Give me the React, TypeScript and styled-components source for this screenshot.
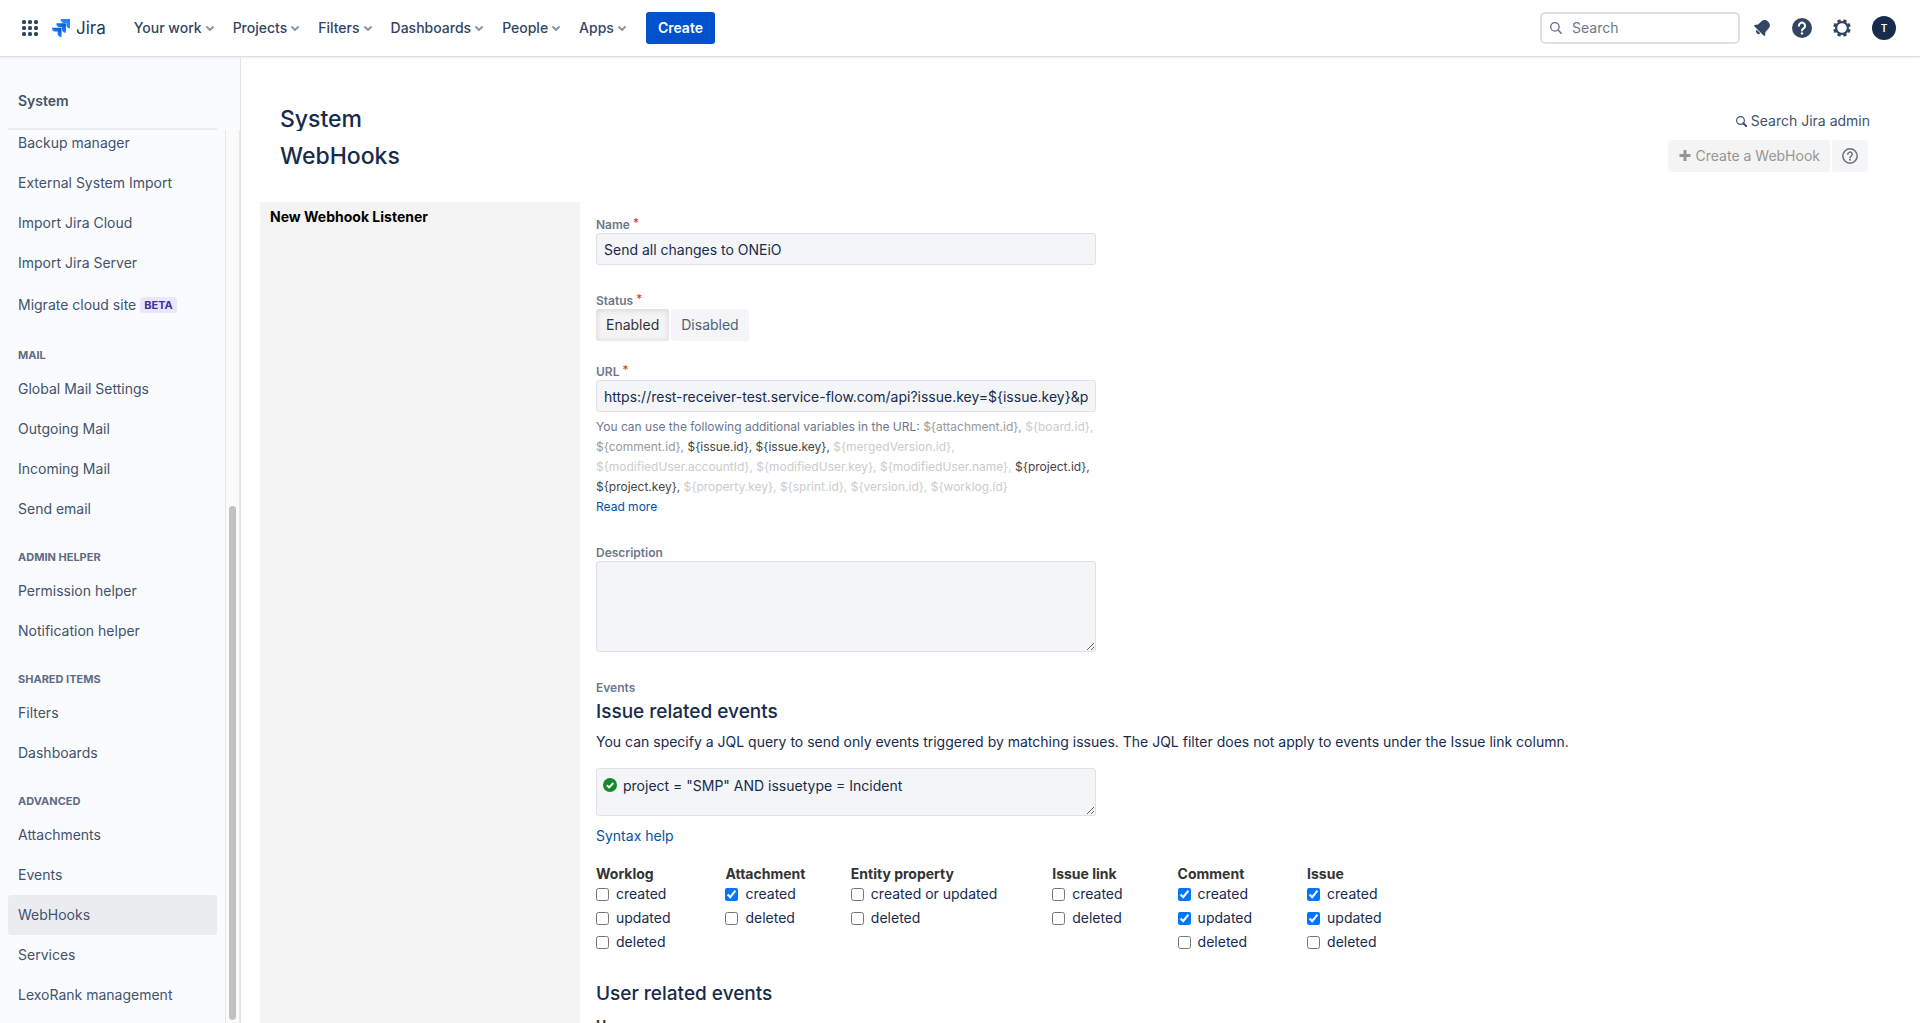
import React, { useEffect, useRef, useState } from "react";
import styled, { createGlobalStyle, css } from "styled-components";

const GlobalStyle = createGlobalStyle`
  *, *::before, *::after { box-sizing: border-box; }
  body {
    margin: 0;
    background: #fff;
    color: #172b4d;
    font-family: Inter, "Liberation Sans", sans-serif;
    font-size: 14px;
    line-height: 20px;
  }
  h1, h2, h3, p, ul { margin: 0; padding: 0; }
  ul { list-style: none; }
  button, input, textarea { font: inherit; color: inherit; }
  a { text-decoration: none; }
`;

const Page = styled.div`
  display: flex;
  flex-direction: column;
  height: 100vh;
  overflow: hidden;
`;

/* ---------- top bar ---------- */

const TopBar = styled.header`
  display: flex;
  align-items: center;
  flex: none;
  height: 56px;
  padding: 0 24px 0 20px;
  background: #fff;
  box-shadow: 0 1px 0 #dcdee3, 0 2px 2px #ebecf0;
  z-index: 1;
`;

const IconButton = styled.button`
  display: flex;
  align-items: center;
  justify-content: center;
  width: 20px;
  height: 20px;
  padding: 0;
  border: 0;
  background: none;
  color: #344563;
`;

const Logo = styled.a`
  display: flex;
  align-items: center;
  gap: 6px;
  margin: 0 28px 0 12px;
  color: #253858;
  font-size: 17px;
`;

const Nav = styled.nav`
  display: flex;
  gap: 19px;
`;

const NavItem = styled.button`
  display: flex;
  align-items: center;
  gap: 4px;
  padding: 0;
  border: 0;
  background: none;
  color: #344563;
  font-weight: 500;
  svg { color: #8993a4; }
`;

const CreateButton = styled.button`
  height: 32px;
  margin-left: 20px;
  padding: 0 12px;
  border: 0;
  border-radius: 3px;
  background: #0052cc;
  color: #fff;
  font-weight: 600;
`;

const SearchBox = styled.label`
  display: flex;
  align-items: center;
  gap: 10px;
  width: 200px;
  height: 32px;
  margin-left: auto;
  padding: 0 8px;
  border: 2px solid #dfe1e6;
  border-radius: 5px;
  color: #5e6c84;
  input {
    flex: 1;
    min-width: 0;
    padding: 0;
    border: 0;
    outline: 0;
    background: none;
  }
  input::placeholder { color: #6b778c; opacity: 1; }
`;

const Tools = styled.div`
  display: flex;
  align-items: center;
  gap: 20px;
  margin-left: 12px;
`;

const Avatar = styled.button`
  width: 24px;
  height: 24px;
  padding: 0;
  border: 0;
  border-radius: 50%;
  background: #172b4d;
  color: #fff;
  font-size: 10px;
  font-weight: 600;
`;

/* ---------- sidebar ---------- */

const Body = styled.div`
  display: flex;
  flex: 1;
  min-height: 0;
`;

const Sidebar = styled.aside`
  display: flex;
  flex-direction: column;
  flex: none;
  width: 241px;
  border-right: 1px solid #e3e5e9;
  background: #fafbfc;
  color: #42526e;
`;

const SidebarTitle = styled.div`
  flex: none;
  width: 209px;
  height: 74px;
  margin-left: 8px;
  padding: 35px 10px 0;
  border-bottom: 2px solid #ebecf0;
  font-weight: 600;
`;

const SidebarScroll = styled.div`
  display: flex;
  flex: 1;
  min-height: 0;
`;

const MenuView = styled.nav`
  flex: 1;
  padding: 0 8px 8px;
  overflow-y: scroll;
  scrollbar-width: none;
`;

const Track = styled.div`
  display: flex;
  flex-direction: column;
  justify-content: flex-end;
  width: 15px;
  padding: 3px;
  border: solid #e8e8e8;
  border-width: 0 1px;
  background: #fafafa;
`;

const Thumb = styled.div`
  height: 58%;
  border-radius: 4px;
  background: #c1c1c1;
`;

const MenuHeading = styled.h3`
  padding: 20px 10px 6px;
  color: #5e6c84;
  font-size: 11px;
  font-weight: 700;
  line-height: 16px;
  text-transform: uppercase;
`;

const MenuLink = styled.a<{ $active?: boolean; $tall?: boolean }>`
  display: flex;
  align-items: center;
  gap: 4px;
  height: ${(p) => (p.$tall ? 44 : 40)}px;
  padding: 0 10px;
  border-radius: 3px;
  background: ${(p) => (p.$active ? "#ebecf0" : "none")};
  color: #42526e;
`;

const Lozenge = styled.span`
  padding: 0 4px;
  border-radius: 3px;
  background: #eae6ff;
  color: #403294;
  font-size: 11px;
  font-weight: 700;
  line-height: 16px;
`;

/* ---------- main area ---------- */

const Main = styled.main`
  display: flex;
  flex-direction: column;
  flex: 1;
  min-width: 0;
  padding: 50px 0 0 19px;
  overflow: hidden;
`;

const HeadRow = styled.div<{ $bar?: boolean }>`
  display: flex;
  align-items: ${(p) => (p.$bar ? "center" : "flex-end")};
  justify-content: space-between;
  flex: none;
  height: ${(p) => (p.$bar ? 32 : 25)}px;
  margin-top: ${(p) => (p.$bar ? 9 : 0)}px;
  padding: 0 ${(p) => (p.$bar ? 52 : 50)}px 0 20px;
`;

const titleText = css`
  font-size: 23px;
  font-weight: 500;
  line-height: 26px;
`;

const SectionTitle = styled.h1`
  ${titleText}
  height: 25px;
  overflow: hidden;
`;

const PageTitle = styled.h2`
  ${titleText}
`;

const AdminSearch = styled.a`
  display: flex;
  align-items: center;
  gap: 4px;
  color: #42526e;
`;

const Actions = styled.div`
  display: flex;
  gap: 2px;
`;

const ActionButton = styled.button`
  display: flex;
  align-items: center;
  justify-content: center;
  gap: 4px;
  min-width: 36px;
  height: 32px;
  padding: 0 10px;
  border: 0;
  border-radius: 3px;
  background: #f4f5f7;
  color: #6b6e73;
  &:disabled { background: #f4f4f4; color: #959595; }
`;

const Columns = styled.div`
  display: flex;
  flex: 1;
  min-height: 0;
  margin-top: 30px;
`;

const ListenerPanel = styled.section`
  flex: none;
  width: 320px;
  padding: 5px 10px;
  background: #f4f4f4;
  color: #000;
  font-weight: 700;
`;

const Form = styled.form`
  flex: 1;
  min-width: 0;
  padding: 15px 16px 0;
`;

const Field = styled.div<{ $gap?: number }>`
  margin-bottom: ${(p) => p.$gap ?? 28}px;
`;

const labelText = css`
  display: flex;
  gap: 3px;
  color: #6b778c;
  font-size: 12px;
  font-weight: 600;
  line-height: 16px;
`;

const Label = styled.label`
  ${labelText}
`;

const GroupLabel = styled.div`
  ${labelText}
`;

const Star = styled.span`
  color: #de350b;
  font-weight: 400;
  line-height: 12px;
`;

const boxed = css`
  display: block;
  width: 100%;
  max-width: 500px;
  border: 1px solid #dfe1e6;
  border-radius: 3px;
  outline: 0;
  background: #f4f5f7;
  color: #172b4d;
`;

const TextInput = styled.input`
  ${boxed}
  height: 32px;
  padding: 0 7px;
`;

const TextBox = styled.textarea<{ $rows: "tall" | "query" }>`
  ${boxed}
  height: ${(p) => (p.$rows === "tall" ? 91 : 48)}px;
  padding: ${(p) => (p.$rows === "tall" ? "7px" : "7px 7px 7px 26px")};
  resize: both;
`;

const ToggleRow = styled.div`
  display: flex;
  gap: 2px;
`;

const Toggle = styled.button<{ $on?: boolean }>`
  height: 32px;
  padding: 0 10px;
  border: 0;
  border-radius: 3px;
  background: ${(p) => (p.$on ? "#f4f4f4" : "#f4f5f7")};
  box-shadow: ${(p) => (p.$on ? "inset 0 1px 6px #d4d4d4" : "none")};
  color: ${(p) => (p.$on ? "#333" : "#505f79")};
`;

const Hint = styled.p`
  max-width: 500px;
  margin-top: 5px;
  color: #6b778c;
  font-size: 12px;
  line-height: 20px;
`;

const tones = { off: "#cccccc", some: "#999999", on: "#444444" };

const Variable = styled.span<{ $tone: keyof typeof tones }>`
  color: ${(p) => tones[p.$tone]};
`;

const TextLink = styled.a`
  color: #0052a8;
`;

const SectionHeading = styled.h3`
  font-size: 19px;
  font-weight: 500;
  line-height: 24px;
`;

const Intro = styled.p`
  margin: 8px 0 16px;
`;

const QueryBox = styled.div`
  position: relative;
  margin-bottom: 10px;
`;

const QueryMark = styled.svg`
  position: absolute;
  top: 10px;
  left: 7px;
`;

const EventGroups = styled.div<{ $top?: number }>`
  display: flex;
  flex-wrap: wrap;
  gap: 44px;
  margin: ${(p) => p.$top ?? 18}px 0 30px;
`;

const EventGroup = styled.div`
  display: flex;
  flex-direction: column;
  gap: 4px;
`;

const EventTitle = styled.div`
  margin-bottom: -4px;
  color: #333;
  font-weight: 700;
`;

const Check = styled.label`
  display: flex;
  align-items: center;
  gap: 7px;
  padding-right: 11px;
  input { width: 13px; height: 13px; margin: 0; }
`;

/* ---------- icons ---------- */

const Chevron = () => (
  <svg width="8" height="8" viewBox="0 0 8 8" fill="none" stroke="currentColor" strokeWidth="1.8" strokeLinecap="round" strokeLinejoin="round">
    <path d="M1 3l3 3 3-3" />
  </svg>
);

const GridIcon = () => (
  <svg width="16" height="16" viewBox="0 0 16 16" fill="currentColor">
    {[2, 8, 14].flatMap((y) => [2, 8, 14].map((x) => <rect key={`${x}-${y}`} x={x - 2} y={y - 2} width="4" height="4" rx="1.5" />))}
  </svg>
);

const JiraMark = () => (
  <svg width="18" height="18" viewBox="0 0 24 24">
    <defs>
      <linearGradient id="mid" x1="1" y1="0" x2="0.4" y2="0.7">
        <stop offset="0.1" stopColor="#0052cc" />
        <stop offset="1" stopColor="#2684ff" />
      </linearGradient>
    </defs>
    <path fill="#2684ff" d="M23.3 0H11.5a5.3 5.3 0 0 0 5.3 5.3H19v2.1a5.3 5.3 0 0 0 5.3 5.2V1a1 1 0 0 0-1-1z" />
    <path fill="url(#mid)" d="M17.5 5.8H5.7A5.3 5.3 0 0 0 11 11h2.2v2.1a5.3 5.3 0 0 0 5.3 5.3V6.8a1 1 0 0 0-1-1z" />
    <path fill="url(#mid)" d="M11.7 11.5H0a5.3 5.3 0 0 0 5.2 5.2h2.200v2.100A5.300 5.300 0 0 0 12.700 24V12.500a1 1 0 0 0-1-1z" />
  </svg>
);

const Bell = () => (
  <svg width="20" height="20" viewBox="0 0 20 20" fill="currentColor">
    <g transform="translate(1 -1) rotate(45 10 10)">
      <path d="M10 2.500C6.800 2.500 4.900 4.800 4.900 7.800v2.800c0 .9-.3 1.600-1 2.300l-.9.900c-.8.800-.4 1.800.6 1.800h12.800c1 0 1.400-1 .6-1.800l-.9-.9c-.7-.7-1-1.400-1-2.300V7.800c0-3-1.900-5.300-5.100-5.300z" />
      <path d="M7.400 16.400h5.200a2.600 2.300 0 0 1-5.200 0z" />
    </g>
  </svg>
);

const HelpSolid = () => (
  <svg width="20" height="20" viewBox="0 0 20 20">
    <circle cx="10" cy="10" r="10" fill="currentColor" />
    <path d="M6.900 7.700a3.100 3.100 0 1 1 4.700 2.700c-1 .6-1.600 1-1.600 2.100" fill="none" stroke="#fff" strokeWidth="2" strokeLinecap="round" />
    <circle cx="10" cy="15.400" r="1.200" fill="#fff" />
  </svg>
);

const HelpOutline = () => (
  <svg width="16" height="16" viewBox="0 0 16 16" fill="none" stroke="currentColor" strokeWidth="1.500">
    <circle cx="8" cy="8" r="7.200" />
    <path d="M5.800 6.300a2.200 2.200 0 1 1 3.300 1.900c-.8.500-1.100.8-1.100 1.600" strokeLinecap="round" />
    <circle cx="8" cy="11.800" r="1" fill="currentColor" stroke="none" />
  </svg>
);

const Gear = () => (
  <svg width="20" height="20" viewBox="0 0 20 20" fill="none" stroke="currentColor">
    <circle cx="10" cy="10" r="5.900" strokeWidth="2.200" />
    {[22.5, 67.5, 112.5, 157.5, 202.5, 247.5, 292.5, 337.5].map((a) => (
      <path key={a} d="M10 1.200v2.600" strokeWidth="3.400" transform={`rotate(${a} 10 10)`} />
    ))}
  </svg>
);

const Magnifier = ({ heavy }: { heavy?: boolean }) => (
  <svg width={heavy ? 11 : 12} height={heavy ? 11 : 12} viewBox="0 0 12 12" fill="none" stroke="currentColor" strokeLinecap="round">
    <circle cx="4.900" cy="4.900" r="4.200" strokeWidth="1.300" />
    <path d="M8 8l3.200 3.200" strokeWidth={heavy ? 2.2 : 1.4} />
  </svg>
);

const Plus = () => (
  <svg width="14" height="14" viewBox="0 0 14 14" stroke="currentColor" strokeWidth="3">
    <path d="M7 1v11M1.500 6.500h11" />
  </svg>
);

/* ---------- content ---------- */

type Item = { text: string; beta?: boolean; active?: boolean };

const menu: { heading?: string; items: Item[] }[] = [
  {
    items: [
      { text: "Backup manager" },
      { text: "External System Import" },
      { text: "Import Jira Cloud" },
      { text: "Import Jira Server" },
      { text: "Migrate cloud site", beta: true },
    ],
  },
  {
    heading: "Mail",
    items: [{ text: "Global Mail Settings" }, { text: "Outgoing Mail" }, { text: "Incoming Mail" }, { text: "Send email" }],
  },
  { heading: "Admin helper", items: [{ text: "Permission helper" }, { text: "Notification helper" }] },
  { heading: "Shared items", items: [{ text: "Filters" }, { text: "Dashboards" }] },
  {
    heading: "Advanced",
    items: [
      { text: "Attachments" },
      { text: "Events" },
      { text: "WebHooks", active: true },
      { text: "Services" },
      { text: "LexoRank management" },
    ],
  },
];

const variables: [string, keyof typeof tones][] = [
  ["attachment.id", "some"],
  ["board.id", "off"],
  ["comment.id", "some"],
  ["issue.id", "on"],
  ["issue.key", "on"],
  ["mergedVersion.id", "off"],
  ["modifiedUser.accountId", "off"],
  ["modifiedUser.key", "off"],
  ["modifiedUser.name", "off"],
  ["project.id", "on"],
  ["project.key", "on"],
  ["property.key", "off"],
  ["sprint.id", "off"],
  ["version.id", "off"],
  ["worklog.id", "off"],
];

const issueEvents: { title: string; options: [string, boolean][] }[] = [
  { title: "Worklog", options: [["created", false], ["updated", false], ["deleted", false]] },
  { title: "Attachment", options: [["created", true], ["deleted", false]] },
  { title: "Entity property", options: [["created or updated", false], ["deleted", false]] },
  { title: "Issue link", options: [["created", false], ["deleted", false]] },
  { title: "Comment", options: [["created", true], ["updated", true], ["deleted", false]] },
  { title: "Issue", options: [["created", true], ["updated", true], ["deleted", false]] },
];

export default function App() {
  const menuRef = useRef<HTMLElement>(null);
  const [enabled, setEnabled] = useState(true);

  useEffect(() => {
    const view = menuRef.current;
    if (view) view.scrollTop = view.scrollHeight;
  }, []);

  return (
    <Page>
      <GlobalStyle />
      <TopBar>
        <IconButton aria-label="Switch to"><GridIcon /></IconButton>
        <Logo href="#"><JiraMark />Jira</Logo>
        <Nav>
          {["Your work", "Projects", "Filters", "Dashboards", "People", "Apps"].map((text) => (
            <NavItem key={text}>{text}<Chevron /></NavItem>
          ))}
        </Nav>
        <CreateButton>Create</CreateButton>
        <SearchBox>
          <Magnifier />
          <input type="search" placeholder="Search" aria-label="Search" />
        </SearchBox>
        <Tools>
          <IconButton aria-label="Notifications"><Bell /></IconButton>
          <IconButton aria-label="Help"><HelpSolid /></IconButton>
          <IconButton aria-label="Settings"><Gear /></IconButton>
          <Avatar aria-label="Profile">T</Avatar>
        </Tools>
      </TopBar>

      <Body>
        <Sidebar>
          <SidebarTitle>System</SidebarTitle>
          <SidebarScroll>
            <MenuView ref={menuRef}>
              {menu.map((group) => (
                <React.Fragment key={group.heading ?? "top"}>
                  {group.heading && <MenuHeading>{group.heading}</MenuHeading>}
                  <ul>
                    {group.items.map((item) => (
                      <li key={item.text}>
                        <MenuLink href="#" $active={item.active} $tall={item.beta}>
                          {item.text}
                          {item.beta && <Lozenge>BETA</Lozenge>}
                        </MenuLink>
                      </li>
                    ))}
                  </ul>
                </React.Fragment>
              ))}
            </MenuView>
            <Track><Thumb /></Track>
          </SidebarScroll>
        </Sidebar>

        <Main>
          <HeadRow>
            <SectionTitle>System</SectionTitle>
            <AdminSearch href="#"><Magnifier heavy />Search Jira admin</AdminSearch>
          </HeadRow>
          <HeadRow $bar>
            <PageTitle>WebHooks</PageTitle>
            <Actions>
              <ActionButton disabled><Plus />Create a WebHook</ActionButton>
              <ActionButton aria-label="Help"><HelpOutline /></ActionButton>
            </Actions>
          </HeadRow>

          <Columns>
            <ListenerPanel>New Webhook Listener</ListenerPanel>
            <Form onSubmit={(e) => e.preventDefault()}>
              <Field>
                <Label htmlFor="name">Name<Star>*</Star></Label>
                <TextInput id="name" defaultValue="Send all changes to ONEiO" />
              </Field>
              <Field $gap={23}>
                <GroupLabel>Status<Star>*</Star></GroupLabel>
                <ToggleRow>
                  <Toggle type="button" $on={enabled} aria-pressed={enabled} onClick={() => setEnabled(true)}>Enabled</Toggle>
                  <Toggle type="button" $on={!enabled} aria-pressed={!enabled} onClick={() => setEnabled(false)}>Disabled</Toggle>
                </ToggleRow>
              </Field>
              <Field>
                <Label htmlFor="url">URL<Star>*</Star></Label>
                <TextInput id="url" defaultValue="https://rest-receiver-test.service-flow.com/api?issue.key=${issue.key}&project.key=${project.key}" />
                <Hint>
                  You can use the following additional variables in the URL:{" "}
                  {variables.map(([name, tone], i) => (
                    <React.Fragment key={name}>
                      <Variable $tone={tone}>{"${" + name + "}" + (i < variables.length - 1 ? "," : "")}</Variable>{" "}
                    </React.Fragment>
                  ))}
                  <br />
                  <TextLink href="#">Read more</TextLink>
                </Hint>
              </Field>
              <Field>
                <Label htmlFor="description">Description</Label>
                <TextBox id="description" $rows="tall" />
              </Field>
              <Field $gap={4}>
                <GroupLabel>Events</GroupLabel>
              </Field>
              <SectionHeading>Issue related events</SectionHeading>
              <Intro>
                You can specify a JQL query to send only events triggered by matching issues. The JQL filter does not apply to events under the Issue link column.
              </Intro>
              <QueryBox>
                <TextBox $rows="query" aria-label="JQL query" defaultValue={'project = "SMP" AND issuetype = Incident'} />
                <QueryMark width="14" height="14" viewBox="0 0 14 14">
                  <circle cx="7" cy="7" r="7" fill="#14892c" />
                  <path d="M3.800 7.200l2.300 2.200 4.200-4.400" fill="none" stroke="#fff" strokeWidth="2" />
                </QueryMark>
              </QueryBox>
              <TextLink href="#">Syntax help</TextLink>
              <EventGroups>
                {issueEvents.map((group) => (
                  <EventGroup key={group.title} role="group" aria-label={group.title}>
                    <EventTitle>{group.title}</EventTitle>
                    {group.options.map(([text, on]) => (
                      <Check key={text}><input type="checkbox" defaultChecked={on} />{text}</Check>
                    ))}
                  </EventGroup>
                ))}
              </EventGroups>
              <SectionHeading>User related events</SectionHeading>
              <EventGroups $top={10}>
                <EventGroup role="group" aria-label="User">
                  <EventTitle>User</EventTitle>
                </EventGroup>
              </EventGroups>
            </Form>
          </Columns>
        </Main>
      </Body>
    </Page>
  );
}
